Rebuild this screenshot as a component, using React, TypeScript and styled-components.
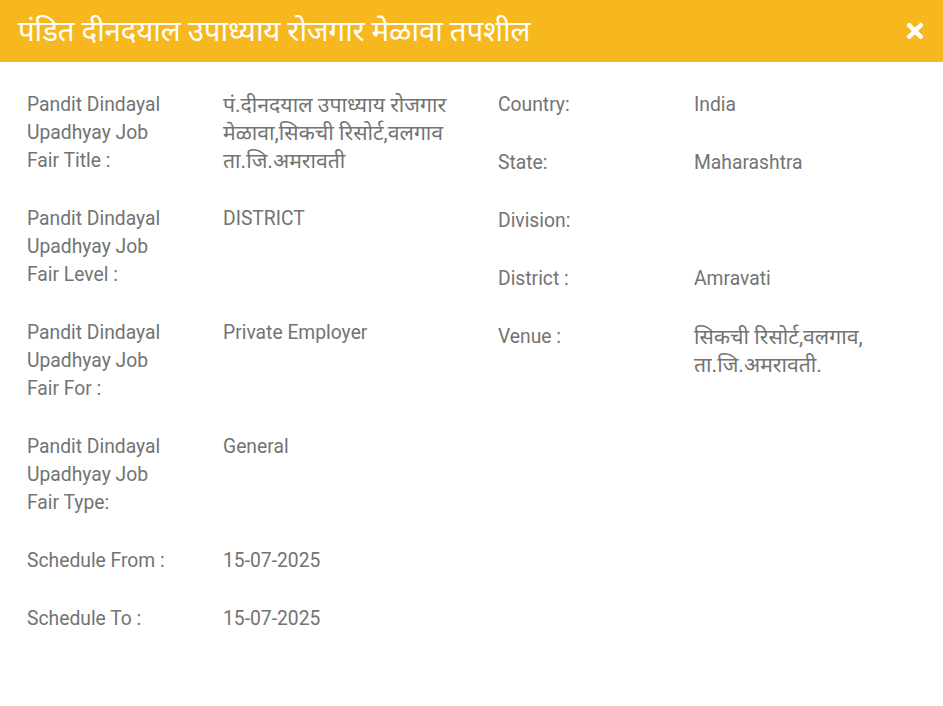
import React from 'react';
import styled, { createGlobalStyle } from 'styled-components';
import { FaTimes } from 'react-icons/fa';

const GlobalStyle = createGlobalStyle`
  html, body {
    margin: 0;
    padding: 0;
    background: #ffffff;
  }
  body {
    font-family: Roboto, "Noto Sans", "DejaVu Sans", sans-serif;
  }
`;

const StyledModal = styled.div`
  width: 943px;
  min-height: 706px;
  background: #ffffff;
`;

const StyledHeader = styled.div`
  height: 62px;
  background: #f7b81f;
  display: flex;
  align-items: center;
  justify-content: space-between;
  padding: 0 16px 0 18px;
  box-sizing: border-box;
`;

const StyledTitle = styled.h4`
  margin: 0;
  color: #ffffff;
  font-size: 29.5px;
  font-weight: 400;
  line-height: 36px;
  letter-spacing: -0.2px;
`;

const StyledClose = styled.button`
  border: 0;
  background: transparent;
  padding: 0;
  color: #ffffff;
  display: flex;
  align-items: center;
  cursor: pointer;
`;

const StyledBody = styled.div`
  display: grid;
  grid-template-columns: 471px 1fr;
  padding-top: 29px;
`;

const StyledColumn = styled.div`
  padding: 0 16px 0 27px;
`;

const StyledRow = styled.div`
  display: grid;
  grid-template-columns: 196px 1fr;
  margin-bottom: 30px;
  font-size: 19.3px;
  line-height: 28px;
  color: #737373;
`;

const StyledLabel = styled.div`
  max-width: 152px;
`;

const StyledValue = styled.div<{ $devanagari?: boolean }>`
  font-size: ${({ $devanagari }) => ($devanagari ? '21.2px' : '19.3px')};
  word-break: break-word;
`;

type Item = { label: string; value: string };

const leftItems: Item[] = [
  {
    label: 'Pandit Dindayal Upadhyay Job Fair Title :',
    value: 'पं.दीनदयाल उपाध्याय रोजगार मेळावा,सिकची रिसोर्ट,वलगाव ता.जि.अमरावती',
  },
  { label: 'Pandit Dindayal Upadhyay Job Fair Level :', value: 'DISTRICT' },
  { label: 'Pandit Dindayal Upadhyay Job Fair For :', value: 'Private Employer' },
  { label: 'Pandit Dindayal Upadhyay Job Fair Type:', value: 'General' },
  { label: 'Schedule From :', value: '15-07-2025' },
  { label: 'Schedule To :', value: '15-07-2025' },
];

const rightItems: Item[] = [
  { label: 'Country:', value: 'India' },
  { label: 'State:', value: 'Maharashtra' },
  { label: 'Division:', value: '' },
  { label: 'District :', value: 'Amravati' },
  { label: 'Venue :', value: 'सिकची रिसोर्ट,वलगाव, ता.जि.अमरावती.' },
];

const isDevanagari = (text: string) => /[\u0900-\u097F]/.test(text);

const DetailColumn = ({ items }: { items: Item[] }) => (
  <StyledColumn>
    {items.map((item) => (
      <StyledRow key={item.label}>
        <StyledLabel>{item.label}</StyledLabel>
        <StyledValue $devanagari={isDevanagari(item.value)}>{item.value}</StyledValue>
      </StyledRow>
    ))}
  </StyledColumn>
);

const App: React.FC = () => (
  <>
    <GlobalStyle />
    <StyledModal>
      <StyledHeader>
        <StyledTitle>पंडित दीनदयाल उपाध्याय रोजगार मेळावा तपशील</StyledTitle>
        <StyledClose aria-label="close">
          <FaTimes size={24} />
        </StyledClose>
      </StyledHeader>
      <StyledBody>
        <DetailColumn items={leftItems} />
        <DetailColumn items={rightItems} />
      </StyledBody>
    </StyledModal>
  </>
);

export default App;
